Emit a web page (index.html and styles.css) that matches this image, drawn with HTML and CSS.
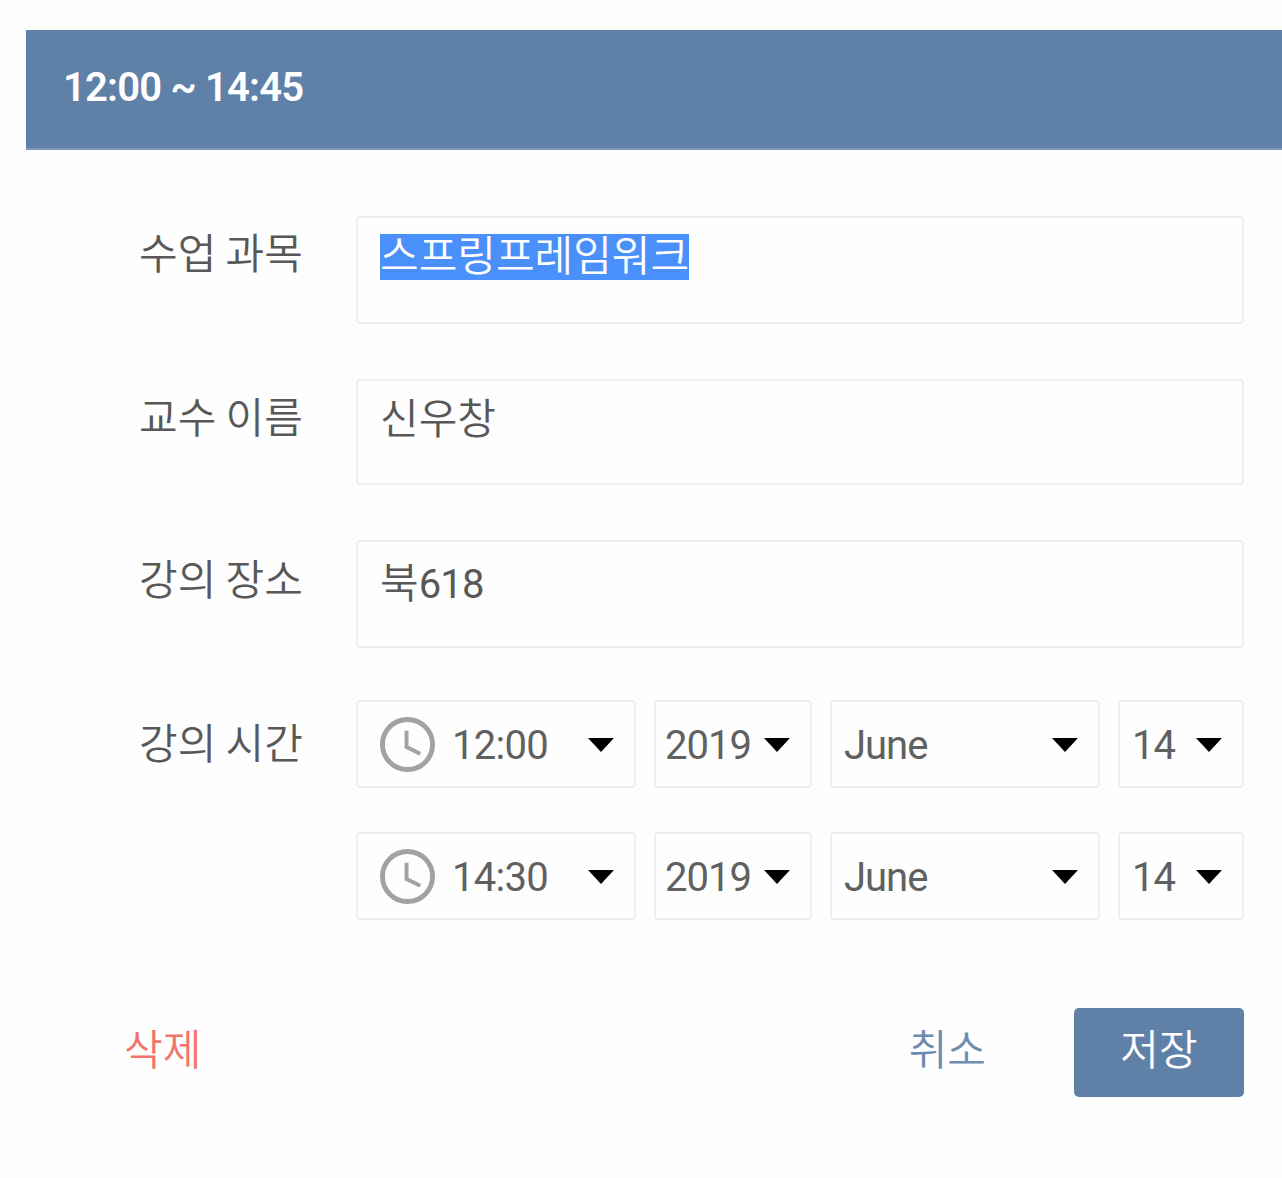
FILE: index.html
```html
<!DOCTYPE html>
<html lang="ko">
<head>
<meta charset="utf-8">
<title>강의 편집</title>
<link rel="stylesheet" href="styles.css">
</head>
<body>
<main class="editor">
  <header class="title"><span>12:00 ~ 14:45</span></header>
  <form class="form">
    <div class="row subject">
      <label class="label">수업 과목</label>
      <div class="field"><span class="value selected">스프링프레임워크</span></div>
    </div>
    <div class="row professor">
      <label class="label">교수 이름</label>
      <div class="field"><span class="value">신우창</span></div>
    </div>
    <div class="row place">
      <label class="label">강의 장소</label>
      <div class="field"><span class="value">북<span class="number">618</span></span></div>
    </div>
    <div class="row time">
      <label class="label">강의 시간</label>
      <div class="times">
        <div class="selects">
          <div class="select clocked"><svg class="clock" viewBox="0 0 56 56"><circle cx="28" cy="28" r="25.5"/><path d="M27 14V30.5L41 37.5"/></svg><span class="text">12:00</span><svg class="arrow" viewBox="0 0 26 14"><path d="M0 0H26L13 14Z"/></svg></div>
          <div class="select year"><span class="text">2019</span><svg class="arrow" viewBox="0 0 26 14"><path d="M0 0H26L13 14Z"/></svg></div>
          <div class="select month"><span class="text">June</span><svg class="arrow" viewBox="0 0 26 14"><path d="M0 0H26L13 14Z"/></svg></div>
          <div class="select day"><span class="text">14</span><svg class="arrow" viewBox="0 0 26 14"><path d="M0 0H26L13 14Z"/></svg></div>
        </div>
        <div class="selects">
          <div class="select clocked"><svg class="clock" viewBox="0 0 56 56"><circle cx="28" cy="28" r="25.5"/><path d="M27 14V30.5L41 37.5"/></svg><span class="text">14:30</span><svg class="arrow" viewBox="0 0 26 14"><path d="M0 0H26L13 14Z"/></svg></div>
          <div class="select year"><span class="text">2019</span><svg class="arrow" viewBox="0 0 26 14"><path d="M0 0H26L13 14Z"/></svg></div>
          <div class="select month"><span class="text">June</span><svg class="arrow" viewBox="0 0 26 14"><path d="M0 0H26L13 14Z"/></svg></div>
          <div class="select day"><span class="text">14</span><svg class="arrow" viewBox="0 0 26 14"><path d="M0 0H26L13 14Z"/></svg></div>
        </div>
      </div>
    </div>
  </form>
  <footer class="actions">
    <span class="delete">삭제</span>
    <span class="cancel">취소</span>
    <span class="save">저장</span>
  </footer>
</main>
</body>
</html>
```
FILE: styles.css
```css
* { box-sizing: border-box; }
body {
  margin: 0;
  background: #fefefe;
  color: #585858;
  font: 350 42px/48px Roboto, "Noto Sans CJK KR DemiLight", "Noto Sans CJK KR", sans-serif;
}
.editor { height: 1178px; padding: 30px 0 0 26px; overflow: hidden; }
.title {
  height: 120px;
  padding: 34px 0 0 37px;
  border-bottom: 2px solid #7d99b9;
  background: #5f80a7;
  color: #fff;
  font-size: 40px;
  font-weight: 600;
  letter-spacing: -0.8px;
}
.form { padding: 66px 38px 0 113px; }
.row { display: grid; grid-template-columns: 217px 888px; }
.label { padding-top: 15px; word-spacing: -1px; }
.professor .label { padding-top: 16px; }
.place .label { padding-top: 17px; }
.time .label { padding-top: 21px; }
.field {
  padding: 15px 0 0 22px;
  border: 2px solid #eee;
  border-radius: 4px;
}
.place .field { padding-top: 18px; }
.subject { height: 108px; margin-bottom: 55px; }
.professor { height: 106px; margin-bottom: 55px; }
.place { height: 108px; margin-bottom: 52px; }
.value { display: inline-block; height: 46px; line-height: 46px; }
.number { font-size: 40px; font-weight: 400; letter-spacing: -0.8px; }
.selected { background: #4a90fa; color: #fff; }
.times { display: grid; gap: 44px; }
.selects { display: grid; grid-template-columns: 280px 158px 270px 126px; gap: 18px; }
.select {
  display: flex;
  align-items: center;
  height: 88px;
  border: 2px solid #eee;
  border-radius: 4px;
  padding: 1px 20px 0 12px;
  font-weight: 400;
  font-size: 40px;
}
.text { padding-top: 3px; color: #606060; letter-spacing: -1px; }
.clocked { padding-left: 22px; }
.clocked .text { letter-spacing: -0.7px; }
.year { padding-left: 9px; }
.clock { width: 55px; height: 55px; margin-right: 17px; fill: none; stroke: #a2a2a2; stroke-width: 5; }
.clock path { stroke-width: 4; }
.arrow { width: 26px; height: 14px; margin-left: auto; fill: #000; }
.actions { display: flex; align-items: flex-start; padding: 88px 38px 0 98px; line-height: 86px; }
.cancel { margin-left: auto; color: #6d8cb2; }
.delete { color: #f2746b; }
.save {
  width: 170px;
  height: 89px;
  margin-left: 88px;
  border-radius: 5px;
  background: #5f80a7;
  color: #fff;
  text-align: center;
}
```
